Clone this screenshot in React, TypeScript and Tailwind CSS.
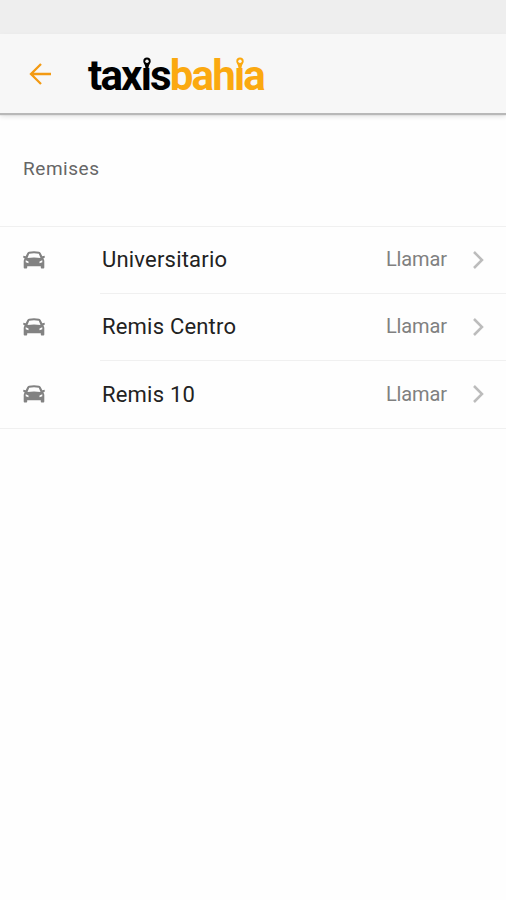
const REMISES = [
  { id: 1, name: "Universitario" },
  { id: 2, name: "Remis Centro" },
  { id: 3, name: "Remis 10" },
];

function CarIcon() {
  return (
    <svg viewBox="0 0 22 18" className="-mt-[2px] h-[18px] w-[22px] shrink-0" fill="#828282">
      <path
        fillRule="evenodd"
        d="M6 0.7Q11-.3 16 .7Q17.2 1 17.8 2.2L19.3 5.3L21.7 4.8V6.8L20.3 7.4Q21.3 8.5 21.3 10V16.5Q21.3 17.4 20.4 17.4H18.6Q17.8 17.4 17.8 16.5V15.2H4.2V16.5Q4.2 17.4 3.4 17.4H1.6Q.7 17.4.7 16.5V10Q.7 8.5 1.7 7.4L.3 6.8V4.8L2.7 5.3L4.2 2.2Q4.8 1 6 .7ZM6.2 2.7L4.5 7Q11 6 17.5 7L15.8 2.7Q11 2 6.2 2.7ZM2.7 9.2V11.2L5.5 12.2V10.4ZM19.3 9.2L16.5 10.4V12.2L19.3 11.2Z"
      />
    </svg>
  );
}

function Pin({ color }: { color: string }) {
  return (
    <svg viewBox="0 0 10 14" className="absolute left-[1px] top-[5px] h-[14px] w-[10px]">
      <path d="M0 0H10V12H0Z" fill="#f7f7f7" />
      <path d="M5 1.5A3.7 3.7 0 0 1 8.7 5.2C8.7 7.6 6.6 8.2 6.4 13H3.6C3.4 8.2 1.3 7.6 1.3 5.2A3.7 3.7 0 0 1 5 1.5Z" fill={color} />
      <circle cx="5" cy="5.2" r="1.7" fill="#f7f7f7" />
    </svg>
  );
}

function Logo() {
  return (
    <h1 className="ml-[37px] mt-[5px] flex h-[50px] items-center text-[42px] font-bold leading-[50px] tracking-[-1.8px]">
      <span className="text-black">
        tax<span className="relative inline-block h-[50px]">i<Pin color="#000" /></span>s
      </span>
      <span className="text-[#fba910]">
        bah<span className="relative inline-block h-[50px]">i<Pin color="#fba910" /></span>a
      </span>
    </h1>
  );
}

export default function App() {
  return (
    <div className="min-h-[900px] w-full bg-[#fefefe] font-[Roboto,sans-serif]">
      <div className="h-[34px] bg-[#eeeeee]" />
      <header className="flex h-[79px] items-center bg-[#f7f7f7] pl-[29px] shadow-[0_2px_1px_#b8b8b8,0_3px_5px_#ddd]">
        <button aria-label="Volver">
          <svg viewBox="0 0 22 22" className="h-[22px] w-[22px]" fill="none" stroke="#f39a13" strokeWidth="2.3">
            <path d="M22 11H2M12 1L2 11L12 21" />
          </svg>
        </button>
        <Logo />
      </header>

      <main>
        <h2 className="flex h-[113px] items-center pb-px pl-[23px] text-[19px] tracking-[0.55px] text-[#666]">
          Remises
        </h2>
        <ul className="border-y border-[#f0f0f0]">
          {REMISES.map((r) => (
            <li key={r.id} className="group flex h-[67px] items-center pl-[23px]">
              <CarIcon />
              <div className="ml-[55px] flex h-full flex-1 items-center border-b border-[#f0f0f0] pb-px pl-[2px] pr-[22px] group-last:border-b-0">
                <span className="flex-1 text-[22px] tracking-[0.2px] text-[#222]">{r.name}</span>
                <span className="-mt-px text-[20px] tracking-[-0.1px] text-[#808080]">Llamar</span>
                <svg viewBox="0 0 12 18" className="ml-[25px] h-[18px] w-3" fill="none" stroke="#bcbcbc" strokeWidth="2.5">
                  <path d="M2 1L10 9L2 17" />
                </svg>
              </div>
            </li>
          ))}
        </ul>
      </main>
    </div>
  );
}
